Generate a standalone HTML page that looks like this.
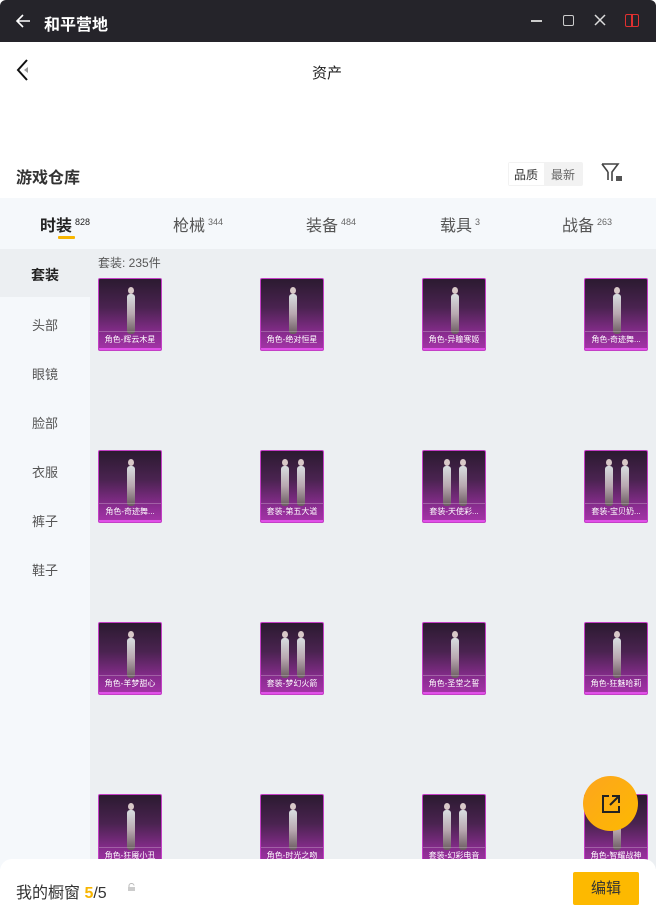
<!DOCTYPE html>
<html><head><meta charset="utf-8"><style>
*{margin:0;padding:0;box-sizing:border-box}
body{width:656px;height:917px;overflow:hidden;position:relative;background:#fff;font-family:"Liberation Sans","Noto Sans CJK SC",sans-serif;color:#222}
.a{position:absolute}
sup{margin-left:3px;font-size:9px;font-weight:normal;color:#666}
.tb{left:0;top:0;width:656px;height:42px;background:#25242a;border-radius:6px 6px 0 0}
.card{position:absolute;width:64px;height:73px;border:1px solid #c43fc6;border-radius:2px;background:linear-gradient(#2b1a30 0%,#4a2350 40%,#8d2d93 80%,#a534a8 100%);overflow:hidden}
.card .lb{position:absolute;left:0;right:0;bottom:2px;height:17px;border-top:1px solid rgba(255,255,255,.25);color:#fff;font-size:8px;line-height:16px;text-align:center;white-space:nowrap;overflow:hidden}
.card .fig{position:absolute;left:28px;top:15px;width:8px;height:40px;border-radius:3px;background:linear-gradient(#d8dde0,#b8a8b0 50%,#6a5a60)}
.card .fig::before{content:"";position:absolute;left:1px;top:-7px;width:6px;height:7px;border-radius:50%;background:#d8c8c8}
.card .fig2{left:20px}
.card .fig3{left:36px}
.card .bot{position:absolute;left:0;right:0;bottom:0;height:2px;background:#e050e8}
.side{left:0;top:249px;width:90px;height:620px;background:#f5f8fb}
.si{position:absolute;left:0;width:90px;text-align:center;font-size:13px;color:#555}
</style></head><body>
<div class="a tb"></div>
<svg class="a" style="left:14px;top:12px" width="18" height="18" viewBox="0 0 18 18"><path d="M16 9H3M9 3L3 9l6 6" stroke="#fff" stroke-width="1.6" fill="none"/></svg>
<div class="a" style="left:44px;top:11px;color:#fff;font-size:16px;font-weight:bold">和平营地</div>
<div class="a" style="left:531px;top:20px;width:11px;height:1.5px;background:#ccc"></div>
<div class="a" style="left:563px;top:15px;width:11px;height:11px;border:1.5px solid #ccc;border-radius:2px"></div>
<svg class="a" style="left:594px;top:14px" width="12" height="12"><path d="M1 1L11 11M11 1L1 11" stroke="#ddd" stroke-width="1.5"/></svg>
<div class="a" style="left:625px;top:14px;width:14px;height:13px;border:1.5px solid #e03030;border-radius:2px"></div>
<div class="a" style="left:631px;top:14px;width:1.5px;height:13px;background:#e03030"></div>
<svg class="a" style="left:14px;top:58px" width="18" height="24"><path d="M13 2L4 12l9 10" stroke="#111" stroke-width="2" fill="none"/><path d="M14 9v6l-4-3z" fill="#999"/></svg>
<div class="a" style="left:312px;top:62px;font-size:15px">资产</div>
<div class="a" style="left:16px;top:164px;font-size:16px;font-weight:bold;color:#333">游戏仓库</div>
<div class="a" style="left:508px;top:162px;width:75px;height:24px;background:#f2f2f2;border-radius:2px"></div>
<div class="a" style="left:509px;top:163px;width:35px;height:22px;background:#fff"></div>
<div class="a" style="left:514px;top:166px;font-size:12px;color:#333">品质</div>
<div class="a" style="left:551px;top:166px;font-size:12px;color:#666">最新</div>
<svg class="a" style="left:601px;top:163px" width="22" height="20"><path d="M1 1h16l-6 8v9M7 9L1 1M7 9v8" stroke="#444" stroke-width="1.6" fill="none"/><rect x="15" y="13" width="6" height="5" fill="#555"/></svg>
<div class="a" style="left:0;top:198px;width:656px;height:51px;background:#f5f8fb"></div>
<div class="a" style="left:40px;top:212px;font-size:16px;font-weight:bold;color:#222">时装<sup style="color:#222">828</sup></div>
<div class="a" style="left:58px;top:236px;width:17px;height:3px;background:#f7b500;border-radius:1px"></div>
<div class="a" style="left:173px;top:212px;font-size:16px;color:#555">枪械<sup>344</sup></div>
<div class="a" style="left:306px;top:212px;font-size:16px;color:#555">装备<sup>484</sup></div>
<div class="a" style="left:440px;top:212px;font-size:16px;color:#555">载具<sup>3</sup></div>
<div class="a" style="left:562px;top:212px;font-size:16px;color:#555">战备<sup>263</sup></div>
<div class="a" style="left:90px;top:249px;width:566px;height:620px;background:#eceff2"></div>
<div class="a side"></div>
<div class="a" style="left:0;top:249px;width:90px;height:48px;background:#eceff2"></div>
<div class="si" style="top:265px;font-weight:bold;color:#222;font-size:14px">套装</div>
<div class="si" style="top:315px">头部</div>
<div class="si" style="top:364px">眼镜</div>
<div class="si" style="top:413px">脸部</div>
<div class="si" style="top:462px">衣服</div>
<div class="si" style="top:511px">裤子</div>
<div class="si" style="top:560px">鞋子</div>
<div class="a" style="left:98px;top:254px;font-size:12px;color:#555">套装: 235件</div>

<div class="card" style="left:98px;top:278px"><div class="fig"></div><div class="lb">角色-辉云木星</div><div class="bot"></div></div>
<div class="card" style="left:260px;top:278px"><div class="fig"></div><div class="lb">角色-绝对恒星</div><div class="bot"></div></div>
<div class="card" style="left:422px;top:278px"><div class="fig"></div><div class="lb">角色-异瞳寒姬</div><div class="bot"></div></div>
<div class="card" style="left:584px;top:278px"><div class="fig"></div><div class="lb">角色-奇迹舞...</div><div class="bot"></div></div>

<div class="card" style="left:98px;top:450px"><div class="fig"></div><div class="lb">角色-奇迹舞...</div><div class="bot"></div></div>
<div class="card" style="left:260px;top:450px"><div class="fig fig2"></div><div class="fig fig3"></div><div class="lb">套装-第五大道</div><div class="bot"></div></div>
<div class="card" style="left:422px;top:450px"><div class="fig fig2"></div><div class="fig fig3"></div><div class="lb">套装-天使彩...</div><div class="bot"></div></div>
<div class="card" style="left:584px;top:450px"><div class="fig fig2"></div><div class="fig fig3"></div><div class="lb">套装-宝贝奶...</div><div class="bot"></div></div>

<div class="card" style="left:98px;top:622px"><div class="fig"></div><div class="lb">角色-羊梦甜心</div><div class="bot"></div></div>
<div class="card" style="left:260px;top:622px"><div class="fig fig2"></div><div class="fig fig3"></div><div class="lb">套装-梦幻火箭</div><div class="bot"></div></div>
<div class="card" style="left:422px;top:622px"><div class="fig"></div><div class="lb">角色-圣堂之誓</div><div class="bot"></div></div>
<div class="card" style="left:584px;top:622px"><div class="fig"></div><div class="lb">角色-狂魅哈莉</div><div class="bot"></div></div>

<div class="card" style="left:98px;top:794px"><div class="fig"></div><div class="lb">角色-狂魇小丑</div><div class="bot"></div></div>
<div class="card" style="left:260px;top:794px"><div class="fig"></div><div class="lb">角色-时光之吻</div><div class="bot"></div></div>
<div class="card" style="left:422px;top:794px"><div class="fig fig2"></div><div class="fig fig3"></div><div class="lb">套装-幻彩电音</div><div class="bot"></div></div>
<div class="card" style="left:584px;top:794px"><div class="fig"></div><div class="lb">角色-智耀战神</div><div class="bot"></div></div>

<div class="a" style="left:583px;top:776px;width:55px;height:55px;border-radius:50%;background:linear-gradient(135deg,#fda51e,#fdb900)"></div>
<svg class="a" style="left:600px;top:793px" width="22" height="22"><path d="M9 3H3v16h16v-6M12 3h7v7M19 3l-9 9" stroke="#222" stroke-width="2" fill="none"/></svg>

<div class="a" style="left:0;top:859px;width:656px;height:58px;background:#fff;border-radius:12px 12px 0 0"></div>
<div class="a" style="left:16px;top:879px;font-size:16px;color:#333">我的橱窗 <span style="color:#f7b500;font-weight:bold">5</span>/5</div>
<svg class="a" style="left:127px;top:883px" width="9" height="9"><path d="M2 4V2.5a2.5 2 0 0 1 5 0" stroke="#bbb" fill="none"/><rect x="1" y="4" width="7" height="4" fill="#ccc"/></svg>
<div class="a" style="left:573px;top:872px;width:66px;height:33px;background:#fdb900;border-radius:2px;font-size:15px;text-align:center;line-height:33px;color:#333">编辑</div>
</body></html>
